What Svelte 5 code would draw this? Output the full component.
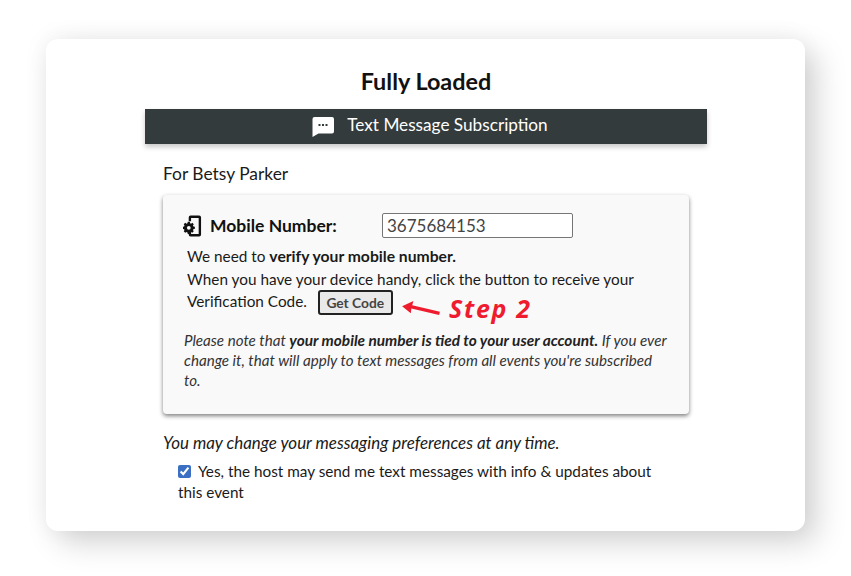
<script>
  let phone = $state("3675684153");
  let consent = $state(true);
</script>

<div class="page">
  <main class="card">
    <h1>Fully Loaded</h1>
    <div class="bar">
      <svg class="msg" viewBox="0 0 22 22" aria-hidden="true">
        <path d="M2.500 2h17.500a2 2 0 0 1 2 2v12.500a2 2 0 0 1-2 2H6.500L.5 22V4a2 2 0 0 1 2-2z" fill="#fff"/>
        <rect x="6.500" y="9" width="2" height="2" fill="#343b3c"/><rect x="10" y="9" width="2" height="2" fill="#343b3c"/><rect x="13.500" y="9" width="2" height="2" fill="#343b3c"/>
      </svg>
      <span>Text Message Subscription</span>
    </div>
    <div class="content">
      <p class="for">For Betsy Parker</p>
      <section class="panel">
        <div class="mobile">
          <svg class="device" viewBox="0 0 20 22" aria-hidden="true">
            <path d="M6 6V2a2 2 0 0 1 2-2h9a2 2 0 0 1 2 2v18a2 2 0 0 1-2 2H8a2 2 0 0 1-2-2v-3h2.500v2.500h8v-17h-8V6z" fill="#111"/>
            <path d="M5 6.500h2.200l.3 1.500 1 .5 1.300-.8 1.500 1.500-.8 1.300.5 1 1.500.3v2.200l-1.500.3-.5 1 .8 1.300-1.500 1.500-1.300-.8-1 .5-.3 1.500H5l-.3-1.500-1-.5-1.400.8L.8 16.600l.8-1.300-.5-1-1.500-.3v-2.200l1.500-.3.5-1-.8-1.300 1.500-1.500 1.400.8 1-.5z" fill="#111"/>
            <circle cx="6.100" cy="12.900" r="2" fill="#fafafa"/>
          </svg>
          <label for="phone">Mobile Number:</label>
          <input id="phone" bind:value={phone} />
        </div>
        <p class="verify">We need to <b>verify your mobile number.</b><br/>When you have your device handy, click the button to receive your<br/>Verification Code. <button>Get Code</button></p>
        <div class="step">
          <svg viewBox="0 0 40 18" aria-hidden="true"><path d="M0 5.500 12 0l-1.300 4.500L40 11.500l-.8 3.400L9.800 8 9.200 13z" fill="#ee1c2e"/></svg>
          <span>Step 2</span>
        </div>
        <p class="note">Please note that <b>your mobile number is tied to your user account.</b> If you ever change it, that will apply to text messages from all events you're subscribed to.</p>
      </section>
      <p class="prefs">You may change your messaging preferences at any time.</p>
      <label class="consent"><input type="checkbox" bind:checked={consent} />Yes, the host may send me text messages with info &amp; updates about this event</label>
    </div>
  </main>
</div>

<style>
  :global(body) { margin: 0; background: #fff; }
  .page { width: 851px; height: 576px; padding: 39px 0 0 46px; box-sizing: border-box; overflow: hidden; font-family: Lato, "Liberation Sans", sans-serif; color: #1a1a1a; }
  .card { width: 759px; height: 492px; box-sizing: border-box; background: #fff; border-radius: 12px; box-shadow: 12px 12px 30px rgba(0,0,0,.17), -2px -2px 24px rgba(0,0,0,.05); padding: 29px 98px 0 99px; }
  h1 { margin: 0 0 14px; font-size: 23.400px; line-height: 27px; font-weight: 700; text-align: center; color: #111; }
  .bar { height: 35px; padding: 0 0 4px 8px; box-sizing: border-box; background: #343b3c; color: #fff; display: flex; align-items: center; justify-content: center; gap: 13px; font-size: 17.200px; box-shadow: 0 3px 5px rgba(0,0,0,.22); }
  .msg { width: 22px; height: 22px; margin-top: 3px; }
  .content { padding: 0 18px; }
  .for { margin: 19px 0 0; font-size: 17.400px; line-height: 21px; }
  .panel { position: relative; box-sizing: border-box; height: 219px; margin-top: 11px; background: #f9f9f9; border-radius: 4px; box-shadow: 0 2px 4px rgba(0,0,0,.5); padding: 18px 20px 0 21px; }
  .mobile { display: flex; align-items: center; height: 25px; }
  .device { width: 19px; height: 22px; flex: none; margin-left: -1px; }
  label[for] { font-weight: 700; font-size: 17.500px; margin-left: 8px; width: 172px; color: #111; }
  #phone { width: 191px; height: 25px; box-sizing: border-box; border: 1px solid #767676; border-radius: 2px; padding: 0 4px; font: 17px Lato, sans-serif; color: #444; background: #fff; }
  .verify { margin: 7px 0 0 3px; font-size: 15.330px; line-height: 22.500px; white-space: nowrap; color: #1a1a1a; }
  .verify b { font-size: 15.700px; }
  button { margin-left: 7px; width: 75px; height: 25px; padding: 0; border: 2px solid #222; border-radius: 3px; background: #e9e9e9; font: 700 13.800px Lato, sans-serif; color: #444; vertical-align: middle; position: relative; top: -1px; }
  .step { position: absolute; left: 238px; top: 96px; display: flex; align-items: center; gap: 8px; color: #ee1c2e; }
  .step svg { width: 40px; height: 17px; margin-top: 2px; }
  .step span { font: italic 700 25px "Open Sans", sans-serif; letter-spacing: 1.700px; line-height: 34px; }
  .note { margin: 14px -5px 0 0; width: 486px; font-size: 15.150px; line-height: 20px; font-style: italic; color: #333; }
  .note b { color: #222; font-weight: 700; font-size: 15.400px; }
  .prefs { margin: 18px 0 0; font-size: 16.930px; line-height: 22px; font-style: italic; }
  .consent { display: block; margin: 7px 0 0 15px; width: 490px; font-size: 15.300px; line-height: 21px; }
  .consent input { width: 13px; height: 13px; margin: 0 7px 0 0; accent-color: #3a6fc4; vertical-align: -1px; }
</style>
